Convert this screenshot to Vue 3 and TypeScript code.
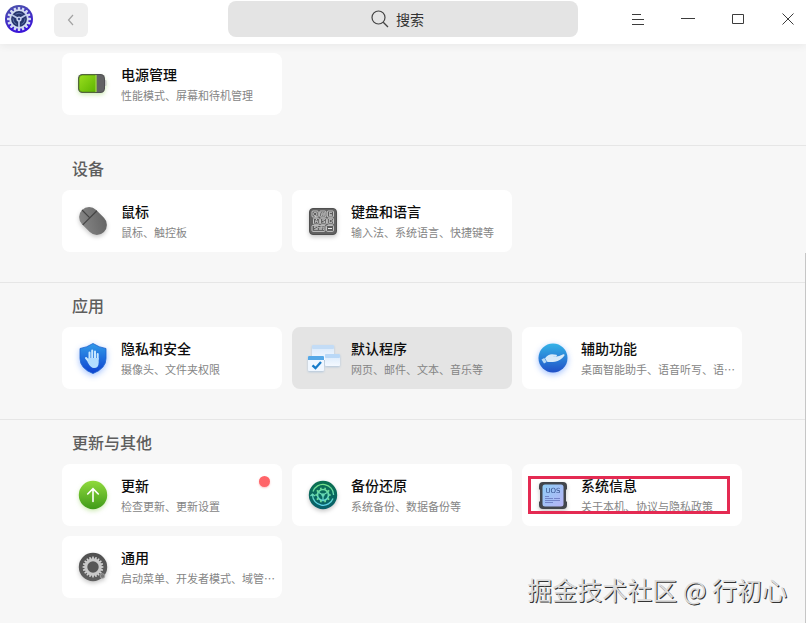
<script setup lang="ts">
import { ref } from 'vue'

interface Entry {
  id: string
  title: string
  note: string
  active?: boolean
  badge?: boolean
  marked?: boolean
}

interface Group {
  heading: string
  entries: Entry[]
}

const keyword = ref('')

const groups: Group[] = [
  { heading: '', entries: [{ id: 'power', title: '电源管理', note: '性能模式、屏幕和待机管理' }] },
  {
    heading: '设备',
    entries: [
      { id: 'mouse', title: '鼠标', note: '鼠标、触控板' },
      { id: 'keyboard', title: '键盘和语言', note: '输入法、系统语言、快捷键等' },
    ],
  },
  {
    heading: '应用',
    entries: [
      { id: 'privacy', title: '隐私和安全', note: '摄像头、文件夹权限' },
      { id: 'defaults', title: '默认程序', note: '网页、邮件、文本、音乐等', active: true },
      { id: 'assist', title: '辅助功能', note: '桌面智能助手、语音听写、语…' },
    ],
  },
  {
    heading: '更新与其他',
    entries: [
      { id: 'update', title: '更新', note: '检查更新、更新设置', badge: true },
      { id: 'backup', title: '备份还原', note: '系统备份、数据备份等' },
      { id: 'info', title: '系统信息', note: '关于本机、协议与隐私政策', marked: true },
      { id: 'general', title: '通用', note: '启动菜单、开发者模式、域管…' },
    ],
  },
]

const spokes = (count: number): number[] => Array.from({ length: count }, (_, i) => (i * 360) / count)
</script>

<template>
  <div class="window" lang="zh-CN">
    <header class="bar">
      <div class="bar-left">
        <svg class="logo" viewBox="0 0 28 28" aria-hidden="true">
          <defs>
            <linearGradient id="logo-bg" x1="0" y1="0" x2="0.3" y2="1">
              <stop offset="0" stop-color="#4c55a8" />
              <stop offset="1" stop-color="#3a14d8" />
            </linearGradient>
          </defs>
          <circle cx="14" cy="14" r="14" fill="url(#logo-bg)" />
          <g fill="#d3dcf2">
            <rect v-for="a in spokes(16)" :key="a" x="12.8" y="2" width="2.4" height="4" rx="0.6" :transform="`rotate(${a} 14 14)`" />
          </g>
          <circle cx="14" cy="14" r="8.8" fill="#26346c" stroke="#d3dcf2" stroke-width="1.8" />
          <g stroke="#b9c6e8" stroke-width="1.8">
            <path v-for="a in [60, 180, 300]" :key="a" d="M14 14V6" :transform="`rotate(${a} 14 14)`" />
          </g>
          <g fill="none" stroke="#5d71a8" stroke-width="1">
            <path v-for="a in [0, 120, 240]" :key="a" d="M10.5 9.2Q14 7 17.5 9.2" :transform="`rotate(${a} 14 14)`" />
          </g>
          <circle cx="14" cy="14" r="2.6" fill="#c9d5f2" />
          <circle cx="14" cy="14" r="1.2" fill="#3b4d8c" />
        </svg>
        <button class="back" type="button" aria-label="返回">
          <svg viewBox="0 0 16 16"><path d="M10 3L5.500 8L10 13" fill="none" stroke="#a2a2a2" stroke-width="1.2" /></svg>
        </button>
      </div>

      <label class="search">
        <svg viewBox="0 0 18 18" aria-hidden="true">
          <circle cx="7.500" cy="7.500" r="6.500" fill="none" stroke="#444" stroke-width="1.2" />
          <path d="M12.200 12.200L17 17" stroke="#444" stroke-width="1.300" />
        </svg>
        <input v-model="keyword" type="text" placeholder="搜索" aria-label="搜索" />
      </label>

      <div class="bar-right">
        <button type="button" aria-label="菜单">
          <svg viewBox="0 0 16 16"><path d="M2 3.500H11M2 8.500H14M2 13.500H14" /></svg>
        </button>
        <button type="button" aria-label="最小化">
          <svg viewBox="0 0 16 16"><path d="M1 7.500H15" /></svg>
        </button>
        <button type="button" aria-label="最大化">
          <svg viewBox="0 0 16 16"><path d="M2.500 3.500H13.500V12.500H2.500Z" /></svg>
        </button>
        <button type="button" aria-label="关闭">
          <svg viewBox="0 0 16 16"><path d="M2.500 2.500L13.500 13.500M13.500 2.500L2.500 13.500" /></svg>
        </button>
      </div>
    </header>

    <main>
      <section v-for="group in groups" :key="group.heading" class="group">
        <h2 v-if="group.heading">{{ group.heading }}</h2>
        <div class="cards">
          <button
            v-for="entry in group.entries"
            :key="entry.id"
            type="button"
            class="card"
            :class="{ active: entry.active }"
          >
            <svg v-if="entry.id === 'power'" class="icon glow-green" viewBox="0 0 36 36">
              <defs>
                <linearGradient id="pw" x1="0" y1="0" x2="1" y2="1">
                  <stop offset="0" stop-color="#9ade1e" /><stop offset="1" stop-color="#5cb400" />
                </linearGradient>
              </defs>
              <rect x="28.500" y="14" width="3" height="6" rx="1" fill="#c8c8c8" />
              <rect x="3" y="8" width="27" height="19" rx="4.500" fill="#505052" />
              <path d="M21 9h4q4 0 4 4v9q0 4-4 4h-4z" fill="#626264" />
              <path d="M7.500 9H21v17H7.500Q4 26 4 22.500v-10Q4 9 7.500 9z" fill="url(#pw)" stroke="#558819" stroke-width="0.800" />
              <path d="M21 9v17" stroke="#b9ee58" stroke-width="1" />
            </svg>

            <svg v-else-if="entry.id === 'mouse'" class="icon glow-gray" viewBox="0 0 36 36">
              <defs>
                <linearGradient id="ms" x1="0" y1="0" x2="1" y2="1">
                  <stop offset="0" stop-color="#8b8b8b" /><stop offset="1" stop-color="#606060" />
                </linearGradient>
              </defs>
              <g transform="rotate(-45 18 18)">
                <rect x="8" y="2.500" width="20" height="31" rx="10" fill="url(#ms)" />
                <path d="M8 13.500H28M18 2.500V13.500" stroke="#454545" stroke-width="1.200" />
              </g>
            </svg>

            <svg v-else-if="entry.id === 'keyboard'" class="icon glow-gray" viewBox="0 0 36 36">
              <rect x="4.500" y="5.500" width="27" height="26" rx="3.500" fill="#636363" stroke="#505050" />
              <g fill="#5c5c5c" stroke="#dedede" stroke-width="0.800">
                <rect x="7" y="8" width="6.200" height="6" rx="1" />
                <rect x="14.700" y="8" width="6.200" height="6" rx="1" />
                <rect x="22.300" y="8" width="6.200" height="6" rx="1" />
                <rect x="8.500" y="15.200" width="5.800" height="6" rx="1" />
                <rect x="15.600" y="15.200" width="5.800" height="6" rx="1" />
                <rect x="22.700" y="15.200" width="5.800" height="6" rx="1" />
                <rect x="7" y="22.400" width="13" height="6" rx="1" />
                <rect x="21.500" y="22.400" width="7" height="6" rx="1" />
              </g>
              <g class="keys">
                <text x="8.300" y="12.800">Q</text><text x="15.500" y="12.800">W</text><text x="23.900" y="12.800">E</text>
                <text x="9.800" y="20">A</text><text x="16.900" y="20">S</text><text x="23.900" y="20">D</text>
                <text x="8.800" y="27.200">Shift</text>
              </g>
              <path d="M23 25.500h4" stroke="#eee" stroke-width="1" />
            </svg>

            <svg v-else-if="entry.id === 'privacy'" class="icon glow-blue" viewBox="0 0 36 36">
              <defs>
                <linearGradient id="pv" x1="0" y1="0" x2="0" y2="1">
                  <stop offset="0" stop-color="#329be9" /><stop offset="1" stop-color="#0d41d0" />
                </linearGradient>
              </defs>
              <path d="M18 3.500Q24 7.500 31 8.500V18.500Q31 28.500 18 33.500Q5 28.500 5 18.500V8.500Q12 7.500 18 3.500Z" fill="url(#pv)" stroke="#1c62cd" stroke-width="0.800" />
              <g stroke="#c7e8ff" stroke-width="2" stroke-linecap="round" fill="none">
                <path d="M14.500 19V12.500M17.200 18V10.500M20 18V11.500M22.700 19V14M14 21.500L11 18" />
              </g>
              <path d="M13.500 18h10.200v4.500q0 5.500-4.700 5.500-3.500 0-6.500-6z" fill="#b2ddff" />
            </svg>

            <svg v-else-if="entry.id === 'defaults'" class="icon glow-pale" viewBox="0 0 36 36">
              <defs>
                <linearGradient id="df" x1="0" y1="0" x2="0" y2="1">
                  <stop offset="0" stop-color="#d6e8fb" /><stop offset="1" stop-color="#f4f9ff" />
                </linearGradient>
              </defs>
              <rect x="7" y="5" width="22" height="15" rx="1" fill="url(#df)" />
              <rect x="7" y="5" width="22" height="4" rx="1" fill="#c3dcf6" />
              <rect x="20" y="14" width="15" height="12" rx="1" fill="url(#df)" />
              <rect x="20" y="14" width="15" height="4" rx="1" fill="#b9d8f7" />
              <rect x="3" y="16" width="16" height="15" rx="1" fill="#f0f7ff" />
              <path d="M4 16H18q1 0 1 1v3H3v-3q0-1 1-1z" fill="#55a8e7" />
              <path d="M7.500 25.300L10.500 28.200L16 22" fill="none" stroke="#187cc9" stroke-width="2.300" />
            </svg>

            <svg v-else-if="entry.id === 'assist'" class="icon glow-blue" viewBox="0 0 36 36">
              <defs>
                <linearGradient id="as" x1="0" y1="0" x2="0" y2="1">
                  <stop offset="0" stop-color="#34b3e7" /><stop offset="1" stop-color="#2150c7" />
                </linearGradient>
              </defs>
              <circle cx="18" cy="18" r="14.500" fill="url(#as)" />
              <path d="M10 18.300Q13 14.500 17 14.300L21.500 14.800Q22.800 15.800 21 16.400L18 17Q23 17.300 28.300 14.300Q30.300 14 29.300 15.800Q25.500 21 20 21.800Q15 22.300 12 21.700Z" fill="#d7eaf9" />
              <path d="M6.500 19.500L9.300 17.900L11.600 22L9 23.500Z" fill="#b8daf4" />
            </svg>

            <svg v-else-if="entry.id === 'update'" class="icon glow-green" viewBox="0 0 36 36">
              <defs>
                <linearGradient id="up" x1="0" y1="0" x2="0" y2="1">
                  <stop offset="0" stop-color="#90da3c" /><stop offset="1" stop-color="#3f9a19" />
                </linearGradient>
              </defs>
              <circle cx="18" cy="18" r="14.200" fill="url(#up)" />
              <path d="M18 24.500V12M12.700 17L18 11.600L23.300 17" fill="none" stroke="#fff" stroke-width="1.600" stroke-linecap="round" />
            </svg>

            <svg v-else-if="entry.id === 'backup'" class="icon glow-gray" viewBox="0 0 36 36">
              <defs>
                <linearGradient id="bk" x1="0" y1="0" x2="0" y2="1">
                  <stop offset="0" stop-color="#0b7050" /><stop offset="1" stop-color="#08606c" />
                </linearGradient>
                <linearGradient id="bl" gradientUnits="userSpaceOnUse" x1="18" y1="7" x2="18" y2="29">
                  <stop offset="0" stop-color="#74e085" /><stop offset="1" stop-color="#5cd2ee" />
                </linearGradient>
              </defs>
              <circle cx="18" cy="18" r="14.200" fill="url(#bk)" />
              <g fill="none" stroke="url(#bl)" stroke-width="1.300">
                <path d="M8 14.500A10.600 10.600 0 0 1 28.600 18M28 21.500A10.600 10.600 0 0 1 7.500 18M5.500 19L7.500 17L10 19" />
                <circle cx="18" cy="18" r="5.500" stroke-width="1.700" />
                <path v-for="a in spokes(10)" :key="a" d="M18 12.500V10.300" stroke-width="1.600" :transform="`rotate(${a + 18} 18 18)`" />
                <path d="M18 18V23M18 18L13.800 15.500M18 18L22.200 15.500" />
              </g>
              <circle cx="18" cy="18" r="1.700" fill="#68d8b5" />
            </svg>

            <svg v-else-if="entry.id === 'info'" class="icon glow-gray" viewBox="0 0 36 36">
              <defs>
                <linearGradient id="in" x1="0" y1="0" x2="1" y2="1">
                  <stop offset="0" stop-color="#8ecdf7" /><stop offset="1" stop-color="#b7b3f5" />
                </linearGradient>
              </defs>
              <path d="M8 5H28Q32 5 32 9V12L31 13V24L32 25V28Q32 32 28 32H8Q4 32 4 28V25L5 24V13L4 12V9Q4 5 8 5Z" fill="#42464c" />
              <path d="M10 7.500H26Q28.500 7.500 28.500 10V27Q28.500 29.500 26 29.500H10Q7.500 29.500 7.500 27V10Q7.500 7.500 10 7.500Z" fill="url(#in)" />
              <text class="uos" x="18" y="16">UOS</text>
              <path d="M10 19.500h4M10 21.500h8M19 21.500h6M10 23.500h15M10 25.500h8" stroke="#6675bc" stroke-width="0.800" />
            </svg>

            <svg v-else class="icon glow-gray" viewBox="0 0 36 36">
              <defs>
                <linearGradient id="gn" x1="0" y1="0" x2="0" y2="1">
                  <stop offset="0" stop-color="#505050" /><stop offset="1" stop-color="#606060" />
                </linearGradient>
              </defs>
              <circle cx="18" cy="18" r="14.200" fill="url(#gn)" />
              <g fill="#d2d2d2">
                <path v-for="a in spokes(20)" :key="a" d="M17 10L17.300 7.600H18.700L19 10Z" :transform="`rotate(${a} 18 18)`" />
              </g>
              <circle cx="18" cy="18" r="7.200" fill="#555" stroke="#c9c9c9" stroke-width="3" />
              <circle cx="27.500" cy="27" r="2.300" fill="#777" stroke="#aaa" stroke-width="0.800" />
            </svg>

            <span class="words">
              <span class="title">{{ entry.title }}</span>
              <span class="note">{{ entry.note }}</span>
            </span>
            <span v-if="entry.badge" class="badge"></span>
            <span v-if="entry.marked" class="mark"></span>
          </button>
        </div>
      </section>
    </main>

    <div class="thumb"></div>
    <div class="watermark">掘金技术社区 @ 行初心</div>
  </div>
</template>

<style>
body {
  background: #f7f7f7;
}
</style>

<style scoped>
.window {
  position: relative;
  box-sizing: border-box;
  min-height: 100vh;
  overflow: hidden;
  background: #f7f7f7;
  font-family: "Noto Sans CJK SC", sans-serif;
  color: #0c0c0c;
}

button,
input {
  font: inherit;
  color: inherit;
  border: 0;
  margin: 0;
  padding: 0;
}

.bar {
  position: relative;
  display: grid;
  grid-template-columns: 1fr 350px 1fr;
  align-items: center;
  box-sizing: border-box;
  height: 44px;
  padding-bottom: 6px;
  background: #fff;
  box-shadow: 0 2px 8px rgba(0, 0, 0, 0.06);
}

.bar-left {
  display: flex;
  align-items: center;
  gap: 21px;
  padding-left: 5px;
}

.logo {
  width: 28px;
  height: 28px;
}

.back {
  display: grid;
  place-items: center;
  width: 34px;
  height: 34px;
  margin-top: 2px;
  border-radius: 6px;
  background: #efefef;
}

.back svg,
.bar-right svg {
  width: 16px;
  height: 16px;
}

.search {
  display: grid;
  grid-template-columns: 1fr 1fr;
  align-items: center;
  height: 36px;
  padding-right: 14px;
  border-radius: 8px;
  background: #e4e4e4;
}

.search svg {
  justify-self: end;
  width: 18px;
  height: 18px;
  margin-right: 7px;
}

.search input {
  min-width: 0;
  outline: 0;
  background: transparent;
  font-size: 14px;
  line-height: 20px;
  color: #333;
}

.search input::placeholder {
  color: #333;
  opacity: 1;
}

.bar-right {
  display: flex;
  justify-content: flex-end;
  gap: 14px;
}

.bar-right button {
  display: grid;
  place-items: center;
  width: 36px;
  height: 36px;
  background: transparent;
}

.bar-right path {
  fill: none;
  stroke: #3c3c3c;
  stroke-width: 1;
}

.group {
  padding: 0 64px 30px 62px;
}

.group:first-child {
  padding-top: 9px;
}

.group + .group {
  border-top: 1px solid #e6e6e6;
}

.group:last-child {
  padding-bottom: 24px;
}

h2 {
  margin: 0;
  padding: 10px 0 10px 10px;
  font-size: 16px;
  font-weight: 500;
  line-height: 24px;
  color: #5e5e5e;
}

.cards {
  display: grid;
  grid-template-columns: repeat(auto-fill, minmax(220px, 1fr));
  gap: 10px;
}

.card {
  position: relative;
  display: flex;
  align-items: center;
  gap: 10px;
  height: 62px;
  padding: 0 6px 0 13px;
  border-radius: 8px;
  background: #fff;
  text-align: left;
}

.card.active {
  background: #e4e4e4;
}

.icon {
  flex: none;
  width: 36px;
  height: 36px;
  overflow: visible;
}

.glow-green {
  filter: drop-shadow(0 2px 2px rgba(100, 190, 20, 0.3));
}

.glow-gray {
  filter: drop-shadow(0 2px 2px rgba(0, 0, 0, 0.22));
}

.glow-blue {
  filter: drop-shadow(0 2px 3px rgba(20, 100, 255, 0.4));
}

.glow-pale {
  filter: drop-shadow(0 1px 1px rgba(60, 130, 200, 0.3));
}

.keys {
  fill: #f0f0f0;
  font: 5px "Liberation Sans", sans-serif;
}

.uos {
  fill: #34508c;
  font: 7px "DejaVu Sans", sans-serif;
  text-anchor: middle;
}

.words {
  display: grid;
  gap: 3px;
  min-width: 0;
  padding-bottom: 2px;
}

.title {
  font-size: 14px;
  font-weight: 500;
  line-height: 20px;
}

.note {
  overflow: hidden;
  font-size: 11px;
  line-height: 16px;
  color: #858585;
  white-space: nowrap;
  text-overflow: ellipsis;
}

.badge {
  position: absolute;
  top: 12px;
  right: 12px;
  width: 11px;
  height: 11px;
  border-radius: 50%;
  background: #ff6468;
  box-shadow: 0 1px 2px rgba(255, 100, 104, 0.4);
}

.mark {
  position: absolute;
  inset: 12px 12px 12px 6px;
  border: 3px solid #e42a52;
}

.thumb {
  position: absolute;
  top: 253px;
  right: 0;
  bottom: 0;
  width: 1px;
  background: #c6c6c6;
}

.watermark {
  position: absolute;
  right: 19px;
  bottom: 16px;
  font-size: 25px;
  line-height: 36px;
  color: #dcdcdc;
  text-shadow: 1px 1px 0 #333;
}
</style>
